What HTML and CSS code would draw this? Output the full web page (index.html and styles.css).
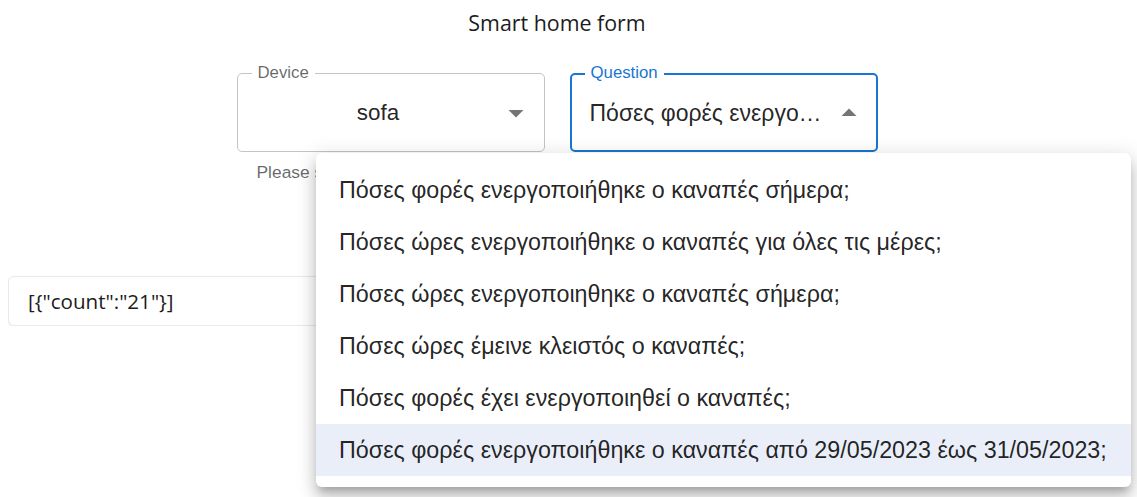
FILE: index.html
```html
<!DOCTYPE html>
<html lang="el">
<head>
<meta charset="utf-8">
<title>Smart home form</title>
<link rel="stylesheet" href="styles.css">
</head>
<body>
<div class="page">
  <h1 class="title">Smart home form</h1>

  <div class="fields">
    <div class="field">
      <div class="outline">
        <span class="label">Device</span>
        <span class="value value-center">sofa</span>
        <svg class="arrow" viewBox="0 0 24 24"><path d="M7 10l5 5 5-5z"/></svg>
      </div>
      <p class="helper">Please select a device</p>
    </div>

    <div class="field">
      <div class="outline focused">
        <span class="label">Question</span>
        <span class="value">Πόσες φορές ενεργοποιήθηκε ο καναπές από 29/05/2023 έως 31/05/2023;</span>
        <svg class="arrow" viewBox="0 0 24 24"><path d="M7 14l5-5 5 5z"/></svg>
      </div>
    </div>
  </div>

  <div class="result">[{"count":"21"}]</div>
</div>

<ul class="menu">
  <li class="item">Πόσες φορές ενεργοποιήθηκε ο καναπές σήμερα;</li>
  <li class="item">Πόσες ώρες ενεργοποιήθηκε ο καναπές για όλες τις μέρες;</li>
  <li class="item">Πόσες ώρες ενεργοποιηθηκε ο καναπές σήμερα;</li>
  <li class="item">Πόσες ώρες έμεινε κλειστός ο καναπές;</li>
  <li class="item">Πόσες φορές έχει ενεργοποιηθεί ο καναπές;</li>
  <li class="item selected">Πόσες φορές ενεργοποιήθηκε ο καναπές από 29/05/2023 έως 31/05/2023;</li>
</ul>
</body>
</html>
```

FILE: styles.css
```css
html, body {
  background: #fff;
}

body {
  margin: 8px;
  font-family: "Open Sans", "Noto Sans", sans-serif;
  color: rgba(0, 0, 0, 0.87);
  overflow: hidden;
}

.page {
  display: flex;
  flex-direction: column;
  padding-right: 23px;
}

.title {
  margin: 0;
  height: 31px;
  font-size: 21.4px;
  font-weight: 400;
  line-height: 30px;
  text-align: center;
  color: #1c1c1c;
}

.fields {
  display: flex;
  justify-content: center;
  gap: 25px;
  margin-top: 34px;
}

.field {
  width: 308px;
  display: flex;
  flex-direction: column;
}

.outline {
  position: relative;
  height: 79px;
  box-sizing: border-box;
  border: 1px solid #c4c4c4;
  border-radius: 5px;
  display: flex;
  align-items: center;
  padding: 0 44px 0 19px;
  font-family: "Liberation Sans", Arial, sans-serif;
  font-size: 22.4px;
  color: rgba(0, 0, 0, 0.87);
}

.outline.focused {
  border: 2px solid #1976d2;
  padding: 0 50px 0 18px;
  font-size: 23px;
}

/* floating label that sits on the top border */
.label {
  position: absolute;
  top: -11px;
  left: 14px;
  padding: 0 6px;
  background: #fff;
  font-size: 16.8px;
  line-height: 20px;
  color: rgba(0, 0, 0, 0.6);
}

.focused .label {
  top: -12px;
  left: 13px;
  font-size: 16.8px;
  color: #1976d2;
}

.value {
  flex: 1;
  min-width: 0;
  white-space: nowrap;
  overflow: hidden;
  text-overflow: ellipsis;
  line-height: 32px;
}

.value-center {
  text-align: center;
}

.arrow {
  position: absolute;
  right: 10px;
  top: 50%;
  margin-top: -18px;
  width: 36px;
  height: 36px;
  fill: rgba(0, 0, 0, 0.54);
}

.focused .arrow {
  right: 9px;
}

.helper {
  margin: 8px 0 0 20px;
  font-family: "Liberation Sans", Arial, sans-serif;
  font-size: 17.4px;
  line-height: 24px;
  color: rgba(0, 0, 0, 0.6);
  white-space: nowrap;
}

.result {
  margin-top: 92px;
  height: 50px;
  box-sizing: border-box;
  display: flex;
  align-items: center;
  padding-left: 19px;
  border-radius: 6px;
  background: #fff;
  border: 1px solid #e6e9ee;
  box-shadow: 0 1px 3px rgba(0, 0, 0, 0.08);
  font-size: 20.6px;
  color: #1c1c1c;
}

/* open select menu, floats above the form */
.menu {
  position: absolute;
  left: 316px;
  top: 153px;
  width: 815px;
  margin: 0;
  padding: 11px 0;
  list-style: none;
  background: #fff;
  border-radius: 6px;
  box-shadow:
    0 7px 7px -4px rgba(0, 0, 0, 0.2),
    0 11px 14px 1px rgba(0, 0, 0, 0.14),
    0 4px 20px 3px rgba(0, 0, 0, 0.12);
  font-family: "Liberation Sans", Arial, sans-serif;
  font-size: 23.3px;
  color: rgba(0, 0, 0, 0.87);
}

.item {
  height: 52px;
  display: flex;
  align-items: center;
  padding: 0 23px;
  white-space: nowrap;
}

.item.selected {
  background: #eaeef8;
}
```
